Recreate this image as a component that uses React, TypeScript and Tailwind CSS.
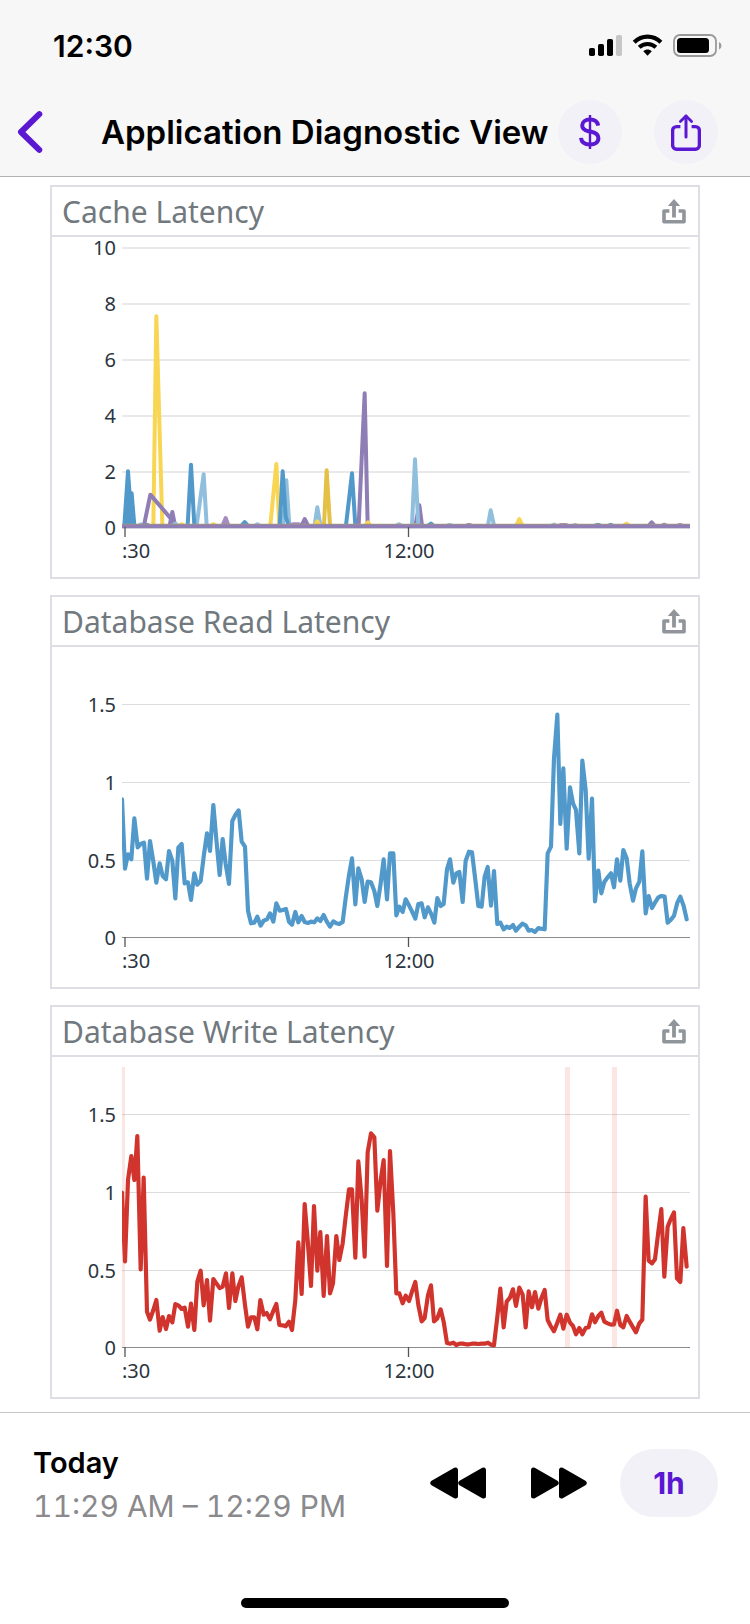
import type { ReactNode } from "react";

const BLUE = "#5199ca";
const SKY = "#90bfde";
const YELLOW = "#f8d552";
const GOLD = "#e4c044";
const PURPLE = "#8f7db5";
const MAUVE = "#a48bc0";
const RED = "#d0342c";

type Spike = { color: string; points: string };
type Tick = { label: string; y: number };

const SERIES_SCALE = "translate(-12 -57) scale(0.33333)";
const CACHE_SCALE = "translate(48 63) scale(0.33333)";

const readLatency =
  "246,628 255,836 264,793 274,808 283,685 293,772 302,762 312,758 321,866 330,753 340,815 349,878 359,820 368,858 378,868 387,783 397,812 406,925 415,773 425,762 434,880 444,877 453,930 463,850 472,884 482,873 492,793 501,730 510,783 520,645 529,748 539,855 548,747 557,822 567,882 577,693 586,675 596,661 605,755 615,770 624,962 633,1000 643,998 652,980 662,1007 671,992 681,988 690,970 700,995 709,940 719,962 728,960 738,957 747,995 756,1004 766,966 775,997 785,978 794,996 804,999 813,995 823,997 832,985 841,993 851,975 860,994 870,1010 880,994 889,1000 898,1002 908,996 917,925 927,855 936,805 946,943 955,835 965,868 974,936 983,875 993,877 1003,903 1012,948 " +
  "1022,880 1031,808 1041,928 1050,790 1060,790 1069,976 1078,950 1088,966 1097,928 1107,946 1116,964 1126,986 1135,942 1145,940 1154,982 1164,952 1173,970 1183,998 1192,924 1202,948 1211,942 1221,838 1230,808 1240,878 1249,850 1258,846 1268,936 1277,812 1287,785 1296,787 1306,870 1315,948 1325,950 1334,860 1343,831 1353,947 1362,843 1372,1002 1381,998 1391,1018 1400,1010 1409,1014 1419,1005 1428,1022 1438,1010 1447,1001 1457,1006 1466,1022 1475,1020 1485,1026 1495,1014 1504,1016 1514,1018 1523,790 1533,770 1542,505 1552,374 1561,702 1570,535 1580,776 1590,592 1599,640 1608,660 1618,790 1627,512 1637,600 1646,806 1656,626 1665,934 1675,842 1684,910 1693,876 1703,862 1713,850 1722,892 1731,808 1741,872 1750,780 1760,805 1769,880 1779,932 1788,895 1798,875 1807,784 1817,970 1826,918 1836,954 1845,938 1855,922 1864,918 1874,920 1883,998 1892,990 1902,977 1912,938 1921,920 1931,948 1940,988";

const writeLatency =
  "246,578 255,784 264,540 274,468 283,540 292,408 302,808 311,533 321,935 330,959 340,930 349,900 359,992 368,951 378,987 387,948 397,967 406,912 416,917 425,927 434,923 444,980 453,911 463,990 472,845 482,812 491,916 501,840 510,962 520,837 529,850 539,864 548,860 558,820 567,924 577,820 586,903 595,860 605,832 615,915 624,980 633,952 643,952 652,988 661,900 671,944 680,939 690,958 699,935 709,912 718,975 728,976 737,979 747,965 756,990 766,900 775,727 785,882 794,612 803,720 813,858 822,618 832,812 841,696 851,888 861,708 870,880 879,850 889,708 898,780 908,730 917,650 927,568 936,568 946,773 955,484 965,600 974,770 983,457 993,400 1003,412 1012,632 " +
  "1022,540 1031,480 1041,798 1050,453 1060,640 1069,880 1078,880 1088,910 1097,887 1107,903 1116,875 1126,846 1135,915 1145,964 1154,954 1164,885 1173,856 1182,964 1192,955 1202,928 1211,965 1221,1029 1230,1031 1240,1028 1249,1035 1259,1031 1268,1031 1278,1033 1287,1033 1296,1031 1306,1031 1315,1032 1325,1031 1334,1031 1344,1028 1353,1034 1362,1036 1372,950 1381,866 1391,982 1400,905 1410,893 1419,868 1428,918 1438,863 1448,884 1457,982 1466,874 1476,922 1485,876 1495,926 1504,895 1514,870 1523,960 1532,978 1542,994 1552,968 1561,944 1570,986 1580,944 1590,968 1599,978 1608,1003 1618,984 1627,1003 1637,984 1646,982 1656,943 1665,967 1675,948 1684,938 1693,965 1703,970 1713,974 1722,973 1731,932 1741,975 1750,982 1760,948 1769,965 1779,982 1788,997 1798,970 1807,959 1817,590 1826,782 1836,790 1845,778 1855,695 1864,627 1873,830 1883,680 1892,658 1902,637 1911,835 1921,846 1930,684 1940,800";

const cacheSpikes: Spike[] = [
  { color: SKY, points: "114,678 122,673 131,678" },
  { color: BLUE, points: "134,678 141,674 148,678" },
  { color: YELLOW, points: "160,676 169,49 187,676" },
  { color: YELLOW, points: "236,678 245,673 254,678" },
  { color: YELLOW, points: "331,678 340,673 350,678" },
  { color: SKY, points: "463,678 472,673 481,678" },
  { color: PURPLE, points: "132,676 151,584 213,656 218,676" },
  { color: PURPLE, points: "209,676 217,636 225,676" },
  { color: SKY, points: "217,678 226,671 235,678" },
  { color: BLUE, points: "73,676 84,514 93,640 95,580 103,676" },
  { color: BLUE, points: "80,676 84,560 90,676 94,610 97,676" },
  { color: SKY, points: "290,676 311,523 320,676" },
  { color: BLUE, points: "263,676 273,494 283,676" },
  { color: MAUVE, points: "368,676 377,654 385,676" },
  { color: BLUE, points: "425,676 434,666 443,676" },
  { color: YELLOW, points: "511,676 529,492 538,676" },
  { color: SKY, points: "549,676 559,541 568,676" },
  { color: BLUE, points: "539,676 548,514 557,650 566,676" },
  { color: MAUVE, points: "568,676 578,673 597,673 604,676" },
  { color: PURPLE, points: "605,676 614,657 624,676" },
  { color: SKY, points: "644,676 652,622 661,676" },
  { color: YELLOW, points: "644,677 652,664 660,677" },
  { color: GOLD, points: "672,676 680,511 690,676" },
  { color: BLUE, points: "738,676 756,520 766,676" },
  { color: PURPLE, points: "776,676 794,280 803,676" },
  { color: YELLOW, points: "795,677 804,667 812,677" },
  { color: SKY, points: "888,678 897,673 906,678" },
  { color: PURPLE, points: "946,676 958,616 966,676" },
  { color: SKY, points: "936,676 945,478 955,676" },
  { color: GOLD, points: "937,679 945,676 953,679" },
  { color: BLUE, points: "983,678 993,671 1002,678" },
  { color: SKY, points: "1040,678 1049,675 1058,678" },
  { color: PURPLE, points: "1098,678 1107,675 1116,678" },
  { color: SKY, points: "1164,676 1172,631 1182,676" },
  { color: YELLOW, points: "1249,676 1258,657 1267,676" },
  { color: SKY, points: "1353,678 1362,674 1371,678" },
  { color: MAUVE, points: "1376,678 1382,675 1398,675 1404,678" },
  { color: SKY, points: "1418,678 1424,675 1434,678" },
  { color: BLUE, points: "1483,678 1490,675 1497,675 1504,678" },
  { color: BLUE, points: "1524,678 1532,674 1540,678" },
  { color: YELLOW, points: "1570,678 1580,671 1588,678" },
  { color: PURPLE, points: "1645,678 1655,667 1665,678" },
  { color: MAUVE, points: "1684,678 1693,674 1702,678" },
  { color: MAUVE, points: "1731,678 1740,675 1749,678" },
];

const cacheTicks: Tick[] = [
  { label: "10", y: 11 },
  { label: "8", y: 67 },
  { label: "6", y: 123 },
  { label: "4", y: 179 },
  { label: "2", y: 235 },
  { label: "0", y: 291 },
];

const databaseTicks: Tick[] = [
  { label: "1.5", y: 57 },
  { label: "1", y: 135 },
  { label: "0.5", y: 213 },
  { label: "0", y: 290 },
];

function UploadIcon() {
  return (
    <svg width="24" height="26" viewBox="0 -1 24 26" fill="none" aria-hidden="true">
      <path d="M7.400 12H2v10.700h20V12h-5.400" stroke="#8f959a" strokeWidth="3.600" strokeLinejoin="round" />
      <path d="M12 5v13.500" stroke="#8f959a" strokeWidth="3.800" />
      <path d="M12 0l6.200 7H5.800z" fill="#8f959a" />
    </svg>
  );
}

function Chart({ label, ticks, bold, children }: { label: string; ticks: Tick[]; bold?: boolean; children: ReactNode }) {
  return (
    <svg viewBox="0 0 646 340" className="block w-full overflow-visible" role="img" aria-label={label}>
      {ticks.map((t) => (
        <rect
          key={t.label}
          x="70"
          y={t.y - (bold ? 1 : 0)}
          width="568"
          height={bold ? 2 : 1}
          fill={bold ? "#e9e9ea" : "#dcdcdc"}
        />
      ))}
      <g fill="#2b3540" fontSize="20" fontFamily="'Noto Sans', sans-serif">
        {ticks.map((t) => (
          <text key={t.label} x="64" y={t.y + (bold ? 7 : 8)} textAnchor="end">
            {t.label}
          </text>
        ))}
        <text x="70" y="321">:30</text>
        <text x="357" y="321" textAnchor="middle">12:00</text>
      </g>
      {!bold && <path d="M70 290.500H638" stroke="#8c8c8c" />}
      <svg x="70" y="0" width="568" height="340" viewBox="70 0 568 340">
        {children}
      </svg>
      <path d="M73 290v10M356.500 290v10" stroke="#555" strokeWidth="1.300" />
    </svg>
  );
}

function Card({ title, children }: { title: string; children: ReactNode }) {
  return (
    <section className="border-2 border-[#dedee4] bg-white">
      <div className="flex h-[50px] items-center justify-between border-b-2 border-[#dedee4] pr-3 pl-[10px]">
        <h2 className="pt-0.5 font-['Noto_Sans',sans-serif] text-[30px] leading-[46px] text-[#71797e]">{title}</h2>
        <button type="button" aria-label={`Share ${title}`}>
          <UploadIcon />
        </button>
      </div>
      {children}
    </section>
  );
}

function StatusBar() {
  return (
    <div className="flex h-[88px] items-center justify-between pt-1 pr-7 pl-[53px]">
      <span className="text-[30px] leading-9 font-semibold">12:30</span>
      <svg width="133" height="28" viewBox="0 -2 133 28" aria-hidden="true">
        <rect x="0" y="14" width="6" height="8" rx="1.800" />
        <rect x="9" y="10" width="6" height="12" rx="1.800" />
        <rect x="18" y="5" width="6" height="17" rx="1.800" />
        <rect x="27" y="1" width="6" height="21" rx="1.800" fill="#c7c7c7" />
        <g fill="none" stroke="#000">
          <path d="M45.200 8.200C52.900 .8 64.200 .8 71.900 8.200" strokeWidth="4.200" />
          <path d="M50.200 13.300C54.900 8.900 62.200 8.900 66.900 13.300" strokeWidth="4" />
        </g>
        <path d="M54.300 17.200c2.500-2.200 6-2.200 8.500 0l-4.250 4.600z" />
        <rect x="85" y="1" width="42" height="21" rx="6" fill="none" stroke="#999" strokeWidth="1.800" />
        <rect x="88" y="4" width="32" height="15" rx="3.500" />
        <path d="M130 8c3.200 1.500 3.200 6 0 7.500z" fill="#999" />
      </svg>
    </div>
  );
}

export default function App() {
  return (
    <div className="flex min-h-screen flex-col bg-white font-['Inter',sans-serif] text-black">
      <header className="border-b border-[#b2b2b3] bg-[#f7f7f7]">
        <StatusBar />
        <nav className="flex h-[88px] items-center pr-8 pl-[17px]">
          <button type="button" aria-label="Back" className="w-[84px] shrink-0">
            <svg width="26" height="44" viewBox="0 0 26 44" fill="none" aria-hidden="true">
              <path d="M22.300 4.200L4 22l18.300 17.800" stroke="#5b18d3" strokeWidth="6" strokeLinecap="round" strokeLinejoin="round" />
            </svg>
          </button>
          <h1 className="flex-1 text-[33px] leading-10 font-semibold whitespace-nowrap">Application Diagnostic View</h1>
          <div className="flex shrink-0 gap-8">
            <button type="button" aria-label="Costs" className="flex size-16 items-center justify-center rounded-full bg-[#f2f1f7]">
              <svg width="22" height="36" viewBox="0 0 22 36" fill="none" stroke="#5b18d3" aria-hidden="true">
                <path d="M11 1v34" strokeWidth="2.400" />
                <path
                  d="M19.200 11.600C18.500 7.700 15.800 5.600 11 5.600 6.200 5.600 3.200 8 3.200 11.500c0 3.300 2.200 4.900 6.200 5.700l3 .6c4.600 1 7 3 7 6.500 0 4-3.300 6.200-8.400 6.200-5.200 0-8.600-2.400-9-6.600"
                  strokeWidth="4"
                />
              </svg>
            </button>
            <button type="button" aria-label="Share" className="flex size-16 items-center justify-center rounded-full bg-[#f2f1f7]">
              <svg width="30" height="38" viewBox="0 0 30 38" fill="none" stroke="#5b18d3" strokeWidth="3.400" aria-hidden="true">
                <path d="M9.400 13.600H5.600a4 4 0 0 0-4 4v14.600a4 4 0 0 0 4 4h18.800a4 4 0 0 0 4-4V17.600a4 4 0 0 0-4-4h-3.800" />
                <path d="M15 3v21" strokeWidth="3" strokeLinecap="round" />
                <path d="M9.400 8.600L15 3l5.600 5.600" strokeWidth="2.800" strokeLinecap="round" strokeLinejoin="round" />
              </svg>
            </button>
          </div>
        </nav>
      </header>

      <main className="flex flex-col gap-4 px-[50px] pt-2 pb-[13px]">
        <Card title="Cache Latency">
          <Chart label="Cache latency" ticks={cacheTicks} bold>
            <g transform={CACHE_SCALE} fill="none" strokeWidth="12" strokeLinejoin="round">
              {cacheSpikes.map((s) => (
                <polyline key={s.points} points={s.points} stroke={s.color} />
              ))}
              <path d="M60 677H1780" stroke="#a99b76" />
              <path d="M60 679H1780" stroke={PURPLE} strokeWidth="11" />
            </g>
          </Chart>
        </Card>
        <Card title="Database Read Latency">
          <Chart label="Database read latency" ticks={databaseTicks}>
            <polyline
              transform={SERIES_SCALE}
              points={readLatency}
              fill="none"
              stroke={BLUE}
              strokeWidth="12.500"
              strokeLinejoin="round"
              strokeLinecap="round"
            />
          </Chart>
        </Card>
        <Card title="Database Write Latency">
          <Chart label="Database write latency" ticks={databaseTicks}>
            <polyline
              transform={SERIES_SCALE}
              points={writeLatency}
              fill="none"
              stroke={RED}
              strokeWidth="12.500"
              strokeLinejoin="round"
              strokeLinecap="round"
            />
            <g fill="#e8503f" fillOpacity="0.14">
              <rect x="70" y="10" width="3" height="280" />
              <rect x="513" y="10" width="5" height="280" />
              <rect x="560" y="10" width="5" height="280" />
            </g>
          </Chart>
        </Card>
      </main>

      <footer className="flex flex-1 flex-col justify-between border-t border-[#c6c6c8] pt-7 pb-4">
        <div className="flex items-center pr-8 pl-[33px]">
          <div className="flex flex-1 flex-col pt-0.5">
            <span className="text-[29px] leading-10 font-semibold">Today</span>
            <span className="mt-1 text-[30px] leading-[38px] text-[#8a8a8d] tabular-nums">11:29 AM – 12:29 PM</span>
          </div>
          <div className="flex items-center">
            <button type="button" aria-label="Earlier" className="mr-[45px]">
              <svg width="56" height="32" viewBox="0 0 56 32" stroke="#000" strokeWidth="5" strokeLinejoin="round" aria-hidden="true">
                <path d="M2.800 16L25.500 3v26zM30.800 16L53.500 3v26z" />
              </svg>
            </button>
            <button type="button" aria-label="Later" className="mr-[33px]">
              <svg width="56" height="32" viewBox="0 0 56 32" stroke="#000" strokeWidth="5" strokeLinejoin="round" aria-hidden="true">
                <path d="M25.200 16L2.500 3v26zM53.200 16L30.500 3v26z" />
              </svg>
            </button>
            <button type="button" className="h-[68px] w-[98px] rounded-full bg-[#f2f1f7] text-[30px] leading-9 font-bold text-[#5b18d3]">
              1h
            </button>
          </div>
        </div>
        <div className="h-[10px] w-[268px] self-center rounded-full bg-black" />
      </footer>
    </div>
  );
}
